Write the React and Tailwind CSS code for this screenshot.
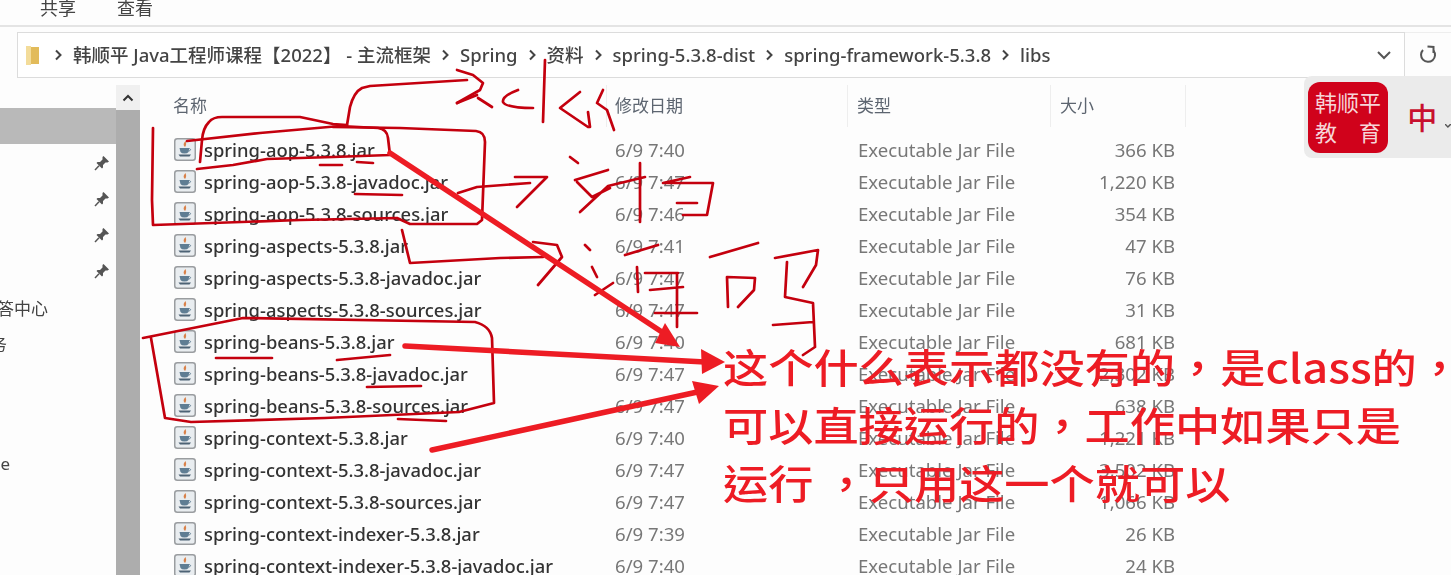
import React from 'react';

const files = [
  ['spring-aop-5.3.8.jar', '6/9 7:40', '366 KB'],
  ['spring-aop-5.3.8-javadoc.jar', '6/9 7:47', '1,220 KB'],
  ['spring-aop-5.3.8-sources.jar', '6/9 7:46', '354 KB'],
  ['spring-aspects-5.3.8.jar', '6/9 7:41', '47 KB'],
  ['spring-aspects-5.3.8-javadoc.jar', '6/9 7:47', '76 KB'],
  ['spring-aspects-5.3.8-sources.jar', '6/9 7:47', '31 KB'],
  ['spring-beans-5.3.8.jar', '6/9 7:40', '681 KB'],
  ['spring-beans-5.3.8-javadoc.jar', '6/9 7:47', '2,302 KB'],
  ['spring-beans-5.3.8-sources.jar', '6/9 7:47', '638 KB'],
  ['spring-context-5.3.8.jar', '6/9 7:40', '1,221 KB'],
  ['spring-context-5.3.8-javadoc.jar', '6/9 7:47', '3,502 KB'],
  ['spring-context-5.3.8-sources.jar', '6/9 7:47', '1,066 KB'],
  ['spring-context-indexer-5.3.8.jar', '6/9 7:39', '26 KB'],
  ['spring-context-indexer-5.3.8-javadoc.jar', '6/9 7:40', '24 KB'],
];

const crumbs = ['韩顺平 Java工程师课程【2022】 - 主流框架', 'Spring', '资料', 'spring-5.3.8-dist', 'spring-framework-5.3.8', 'libs'];

// thin pen strokes drawn over the window
const ink = [
  'M200 162 L202 140 Q203 128 209 122 Q213 117 222 117 L300 117 L333 124 L347 125',
  'M187 141 L260 133 L340 126 L378 128 Q387 129 388 138 L390 155 L333 157 L267 159 L233 165 L197 169',
  'M333 127 L400 128 L476 131 Q485 132 485 142 L482 220 L477 224 L410 224 L397 218 L300 220 L183 224 L153 225 L152 200 L153 128',
  'M347 125 L350 107 Q354 92 362 88 L370 86 L467 80',
  'M457 70 L473 75 L483 83 L480 90 L457 103',
  'M457 103 L477 95 M478 98 L492 107',
  'M518 90 Q502 96 503 102 Q506 108 533 108',
  'M545 60 L543 122',
  'M580 92 L560 108 L588 127 M588 112 L590 127 M603 90 L597 103 L607 110 L614 130',
  'M458 193 L477 187 L530 183',
  'M515 177 L547 177 L517 207',
  'M570 157 L578 163 M575 180 L608 170 M577 182 L592 197 L610 188 M607 187 L580 212',
  'M608 186 L645 177 M640 163 L640 222 M663 183 L690 177 M663 183 L713 183 L707 215 L683 215 M677 203 L697 203',
  'M402 230 L410 263 L500 258 L543 257',
  'M533 242 L557 245 L562 257 L538 285',
  'M585 245 L590 250 M592 267 L597 277 M595 295 L613 283',
  'M625 255 L658 245 M637 267 L638 292 M645 273 L678 273 M650 290 L683 287 M677 273 L677 327 M655 313 L697 313',
  'M710 257 L758 243 M727 277 L728 307 M727 277 L755 278 L754 290 L738 307',
  'M775 258 L818 250 L816 265 L803 287 M787 262 L785 297 L813 303 L815 347 L803 355 M773 325 L813 322',
  'M143 338 L243 318 L475 322 Q490 326 492 338 L494 403 L459 412 L325 418 L191 422 L165 418 L151 338',
  'M216 358 L272 358 M337 360 L390 355 M367 387 L421 386 M398 419 L446 421',
  'M320 165 L342 165 M357 162 L373 163 M355 194 L402 195',
];

function JarIcon() {
  return (
    <svg width="22" height="23" viewBox="0 0 22 23" className="shrink-0">
      <rect x="0.75" y="0.75" width="20.5" height="21.5" rx="2.5" fill="#e9edf0" stroke="#9a9da0" strokeWidth="1.5" />
      <path d="M11.5 3 Q8 6.5 11 9 Q13 6.5 11.5 3Z" fill="#d9824a" />
      <path d="M5.5 10 L15.5 10 L14.5 14 Q13.5 15.5 10.5 15.5 Q7.5 15.5 6.5 14Z" fill="#5f7d93" />
      <path d="M15.5 10.5 Q18 11 15 13.5" fill="none" stroke="#5f7d93" />
      <path d="M4.5 16.5 L17 16.5 L15.5 18.5 L6 18.5Z" fill="#4d6375" />
    </svg>
  );
}

function Chevron() {
  return (
    <svg width="9" height="12" viewBox="0 0 9 12" className="mx-[10px] shrink-0">
      <path d="M2 1.5 L6.5 6 L2 10.5" fill="none" stroke="#444" strokeWidth="2" />
    </svg>
  );
}

function Pin({ className }) {
  return (
    <svg width="16" height="16" viewBox="0 0 16 16" className={className}>
      <path d="M9.5 1 L15 6.5 L13.5 7.5 L11.5 7.5 L9 10 L9 12.5 L8 13.5 L2.5 8 L3.5 7 L6 7 L8.5 4.5 L8.5 2Z" fill="#555" />
      <path d="M5 10.8 L1 15" stroke="#555" strokeWidth="1.5" />
    </svg>
  );
}

function HeaderCell({ children, className }) {
  return <div className={'h-[42px] flex items-center border-r border-[#eeeeee] ' + className}>{children}</div>;
}

export default function App() {
  return (
    <div className="relative w-[1451px] h-[575px] overflow-hidden bg-[#fdfdfd] text-[18.6px] text-[#3c3c3c] font-['Noto_Sans','Noto_Sans_CJK_SC',sans-serif]">
      <div className="h-full blur-[0.35px]">
        {/* menu strip */}
        <div className="h-[27px] flex items-end gap-[41px] pl-[40px] pb-[5px] border-b-2 border-[#e4e4e4] text-[18px] leading-[24px] text-[#444]">
          <span>共享</span>
          <span>查看</span>
        </div>

        {/* address bar */}
        <div className="h-[51px] flex pl-[17px] pt-[5px]">
          <div className="w-[1388px] flex items-center pl-[8px] pr-[12px] border border-[#dcdcdc] bg-white font-medium text-[18.5px]">
            <svg width="14" height="19" viewBox="0 0 14 19" className="mr-[4px] shrink-0">
              <path d="M0 0 H5 V19 H0Z" fill="#f3dc9a" />
              <path d="M5 1 H13 V18 H5Z" fill="#e2bb5a" />
            </svg>
            {crumbs.map((c) => (
              <div key={c} className="flex items-center whitespace-nowrap">
                <Chevron />
                <span className="text-[#444]">{c}</span>
              </div>
            ))}
            <svg width="16" height="10" viewBox="0 0 16 10" className="ml-auto">
              <path d="M2 2 L8 8 L14 2" fill="none" stroke="#555" strokeWidth="2" />
            </svg>
          </div>
          <div className="w-[46px] flex items-center justify-center border-y border-[#eeeeee]">
            <svg width="20" height="20" viewBox="0 0 20 20">
              <path d="M5 5 A7 7 0 1 0 15.5 5.5" fill="none" stroke="#555" strokeWidth="2" />
              <path d="M9.5 1.5 L15.5 2 L15.5 8" fill="none" stroke="#555" strokeWidth="2" />
            </svg>
          </div>
        </div>

        <div className="flex h-[497px]">
          {/* nav pane */}
          <div className="w-[116px] shrink-0 flex flex-col pt-[30px] overflow-hidden">
            <div className="h-[36px] bg-[#b9b9b9]" />
            <div className="flex flex-col items-end gap-[20px] pr-[6px] pt-[11px]">
              <Pin />
              <Pin />
              <Pin />
              <Pin />
            </div>
            <div className="w-[116px] -ml-[20px] mt-[18px] h-[24px] whitespace-nowrap text-[#444] text-[17px] leading-[24px]">解答中心</div>
            <div className="w-[116px] -ml-[10px] mt-[12px] h-[24px] whitespace-nowrap text-[#444] text-[17px] leading-[24px]">务</div>
            <div className="w-[116px] -ml-[10px] mt-[95px] h-[24px] whitespace-nowrap text-[#444] text-[17px] leading-[24px]">ne</div>
          </div>

          {/* scrollbar */}
          <div className="w-[24px] shrink-0 pt-[7px] flex flex-col">
            <div className="h-[25px] bg-[#f0f0f0] flex items-center justify-center">
              <svg width="12" height="8" viewBox="0 0 12 8">
                <path d="M1.5 6.5 L6 2 L10.5 6.5" fill="none" stroke="#333" strokeWidth="2" />
              </svg>
            </div>
            <div className="flex-1 bg-[#adadad]" />
          </div>

          {/* file list */}
          <div className="flex-1 pl-[34px] pt-[7px] min-w-0">
            <div className="flex text-[#5d6570] text-[17px]">
              <HeaderCell className="w-[433px]"><span className="-ml-[1px]">名称</span></HeaderCell>
              <HeaderCell className="w-[241px] pl-[8px]">修改日期</HeaderCell>
              <HeaderCell className="w-[203px] pl-[9px]">类型</HeaderCell>
              <HeaderCell className="w-[135px] pl-[9px]">大小</HeaderCell>
            </div>
            <div className="pt-[7px]">
              {files.map(([name, date, size]) => (
                <div key={name} className="flex h-[32px] items-center">
                  <div className="w-[433px] flex items-center">
                    <JarIcon />
                    <span className="ml-[8px] whitespace-nowrap text-[#333] font-medium text-[18.4px]">{name}</span>
                  </div>
                  <div className="w-[243px] pl-[8px] text-[#777] whitespace-nowrap">{date}</div>
                  <div className="w-[200px] pl-[8px] text-[#777] whitespace-nowrap">Executable Jar File</div>
                  <div className="w-[125px] text-right text-[#777] whitespace-nowrap">{size}</div>
                </div>
              ))}
            </div>
          </div>
        </div>
      </div>

      {/* watermark logo */}
      <div className="absolute left-[1304px] top-[76px] w-[147px] h-[82px] bg-[#ebebeb] rounded-l-[8px] flex items-center pl-[4px]">
        <div className="w-[83px] h-[71px] bg-[#d0021b] rounded-[12px] flex flex-col items-center justify-center text-[#f6d5d8] text-[22px] leading-[30px]">
          <span>韩顺平</span>
          <span className="flex w-[66px] justify-between"><span>教</span><span>育</span></span>
        </div>
        <span className="ml-[19px] text-[#c8102e] text-[30px] font-medium">中</span>
        <svg width="6" height="4" viewBox="0 0 6 4" className="ml-[8px] mt-[18px]">
          <path d="M0 0 L3 3 L6 0" fill="none" stroke="#555" strokeWidth="1.5" />
        </svg>
      </div>

      {/* pen annotations */}
      <svg width="1451" height="575" viewBox="0 0 1451 575" className="absolute inset-0 pointer-events-none">
        <g fill="none" stroke="#c4000e" strokeWidth="2.7" strokeLinecap="round" strokeLinejoin="round">
          {ink.map((d) => <path key={d} d={d} />)}
        </g>
        <g stroke="#ed1c24" strokeWidth="5.5" strokeLinecap="round">
          <path d="M390 153 L668 336" />
          <path d="M405 346 L705 362" />
          <path d="M432 450 L702 391" />
        </g>
        <g fill="#ed1c24">
          <path d="M680 347 L665 323 L655 343Z" />
          <path d="M725 362 L701 349 L702 374Z" />
          <path d="M719 386 L692 381 L699 404Z" />
        </g>
      </svg>

      {/* note text */}
      <div className="absolute left-[723px] top-[337px] w-[640px] origin-top-left scale-x-[1.13] text-[#ed1c24] text-[40px] leading-[58px] whitespace-nowrap font-medium font-['Noto_Sans_CJK_TC','Noto_Sans',sans-serif]">
        <div>这个什么表示都没有的，是class的，</div>
        <div>可以直接运行的，工作中如果只是</div>
        <div>运行 ，只用这一个就可以</div>
      </div>
    </div>
  );
}
